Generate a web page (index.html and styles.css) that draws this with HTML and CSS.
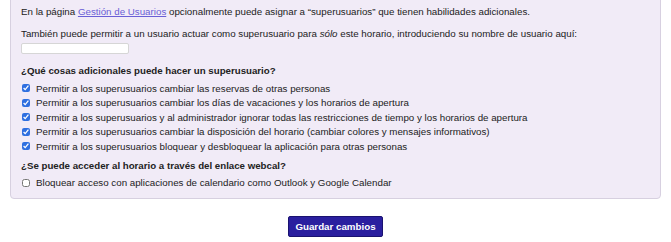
FILE: index.html
```html
<!DOCTYPE html>
<html lang="es">
<head>
<meta charset="utf-8">
<link rel="stylesheet" href="styles.css">
</head>
<body>
<div class="panel">
  <p class="intro">En la página <a href="#">Gestión de Usuarios</a> opcionalmente puede asignar a “superusuarios” que tienen habilidades adicionales.</p>
  <p class="also">También puede permitir a un usuario actuar como superusuario para <em>sólo</em> este horario, introduciendo su nombre de usuario aquí:</p>
  <input class="user" type="text">
  <h4 class="head">¿Qué cosas adicionales puede hacer un superusuario?</h4>
  <ul class="opts">
    <li><input type="checkbox" checked><span>Permitir a los superusuarios cambiar las reservas de otras personas</span></li>
    <li><input type="checkbox" checked><span>Permitir a los superusuarios cambiar los días de vacaciones y los horarios de apertura</span></li>
    <li><input type="checkbox" checked><span>Permitir a los superusuarios y al administrador ignorar todas las restricciones de tiempo y los horarios de apertura</span></li>
    <li><input type="checkbox" checked><span>Permitir a los superusuarios cambiar la disposición del horario (cambiar colores y mensajes informativos)</span></li>
    <li><input type="checkbox" checked><span>Permitir a los superusuarios bloquear y desbloquear la aplicación para otras personas</span></li>
  </ul>
  <h4 class="head head2">¿Se puede acceder al horario a través del enlace webcal?</h4>
  <ul class="opts">
    <li><input type="checkbox"><span>Bloquear acceso con aplicaciones de calendario como Outlook y Google Calendar</span></li>
  </ul>
</div>
<div class="actions">
  <button class="save" type="button">Guardar cambios</button>
</div>
</body>
</html>
```
FILE: styles.css
```css
html, body {
  margin: 0;
  padding: 0;
  background: #ffffff;
}
body {
  font-family: "Liberation Sans", Arial, sans-serif;
  font-size: 9.75px;
  color: #222222;
}
.panel {
  margin: -6px 10px 0 10px;
  padding: 10px 10px 8px 10px;
  background: #f1ebf7;
  border: 1px solid #d7d0e0;
  border-radius: 4px;
}
.intro {
  margin: 0;
  line-height: 13px;
}
.intro a {
  color: #6a5fd6;
  text-decoration: underline;
}
.also {
  margin: 9px 0 0 0;
  line-height: 13px;
}
.also em {
  font-style: italic;
}
.user {
  display: block;
  margin: 3px 0 0 0;
  width: 108px;
  height: 11px;
  padding: 0;
  border: 1px solid #d6d6d6;
  border-radius: 2px;
  background: #ffffff;
  box-sizing: border-box;
}
.head {
  margin: 11px 0 0 0;
  font-size: 9.7px;
  font-weight: bold;
  line-height: 12px;
}
.head2 {
  margin-top: 6px;
}
.opts {
  list-style: none;
  margin: 4px 0 0 0;
  padding: 0;
}
.opts li {
  display: flex;
  align-items: center;
  height: 14.5px;
  line-height: 13px;
}
.opts input {
  width: 8px;
  height: 8px;
  margin: 0 6px 0 1px;
  accent-color: #2f6fe0;
}
.actions {
  display: flex;
  justify-content: center;
  margin-top: 17px;
}
.save {
  font-family: "Liberation Sans", Arial, sans-serif;
  font-size: 9.75px;
  font-weight: bold;
  color: #ffffff;
  background: #2a1f9f;
  border: 1px solid #1a1270;
  border-radius: 2px;
  width: 95px;
  height: 21px;
  padding: 0;
}
```
